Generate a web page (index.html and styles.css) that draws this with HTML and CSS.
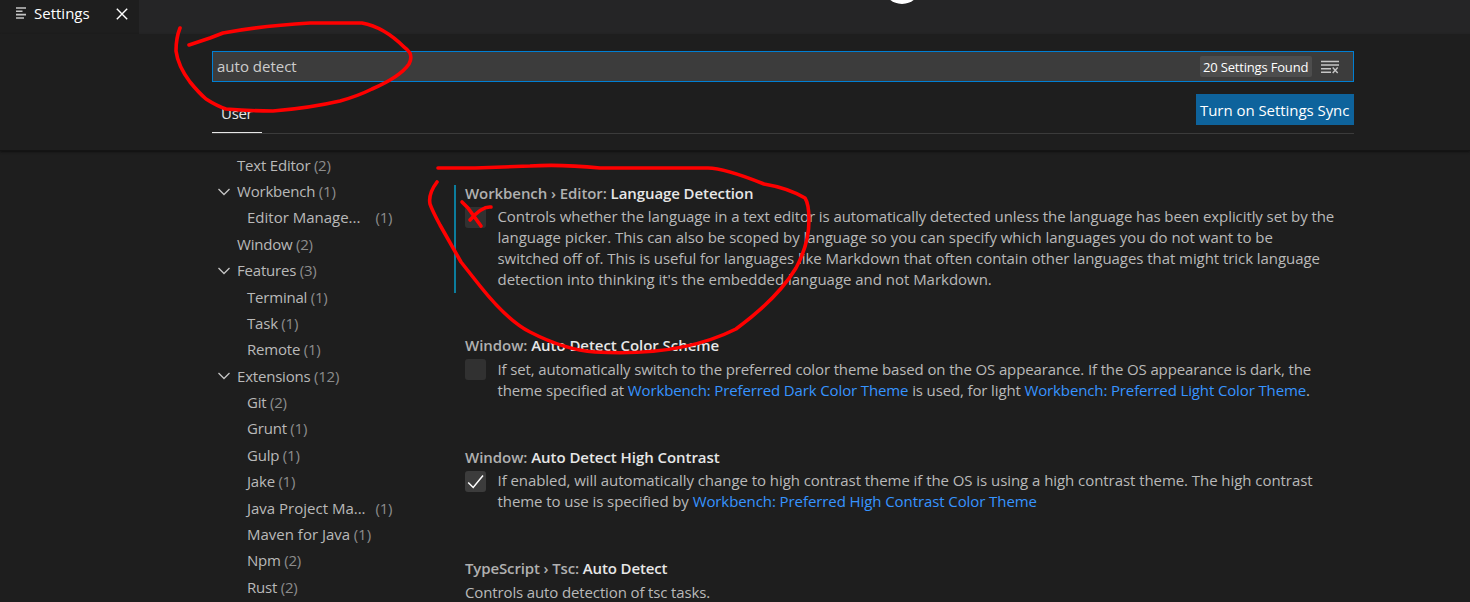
FILE: index.html
```html
<!DOCTYPE html>
<html lang="en">
<head>
<meta charset="utf-8">
<title>Settings</title>
<link rel="stylesheet" href="styles.css">
</head>
<body>
<div class="tabs">
  <div class="tab">
    <svg class="tab-icon" width="12" height="13" viewBox="0 0 12 13"><path d="M0 1h10M0 4.3h6.5M0 7.6h10M0 11h8" stroke="#c5c5c5" stroke-width="1.6"/></svg>
    <span class="tab-label">Settings</span>
    <svg class="tab-close" width="12" height="12" viewBox="0 0 12 12"><path d="M.8.8l10.4 10.4M11.2.8L.8 11.2" stroke="#fff" stroke-width="1.4"/></svg>
  </div>
</div>
<header class="header">
  <div class="search">
    <span class="query">auto detect</span>
    <span class="count">20 Settings Found</span>
    <svg class="clear" width="18" height="14" viewBox="0 0 18 14"><path d="M0 1.5h18M0 5h18M0 8.7h10M0 12.3h10" stroke="#c5c5c5" stroke-width="1.5"/><path d="M11.7 7.5l5 5.5M16.7 7.5l-5 5.5" stroke="#c5c5c5" stroke-width="1.4"/></svg>
  </div>
  <div class="scope">
    <span class="scope-tab">User</span>
    <button class="sync">Turn on Settings Sync</button>
  </div>
</header>
<main class="body">
  <nav class="tree">
    <div class="row"><span>Text Editor</span><i>(2)</i></div>
    <div class="row open"><svg width="12" height="8" viewBox="0 0 12 8"><path d="M.5 1L6 6.5 11.500 1"/></svg><span>Workbench</span><i>(1)</i></div>
    <div class="row sub cut"><span>Editor Manage...</span><i>(1)</i></div>
    <div class="row"><span>Window</span><i>(2)</i></div>
    <div class="row open"><svg width="12" height="8" viewBox="0 0 12 8"><path d="M.5 1L6 6.5 11.500 1"/></svg><span>Features</span><i>(3)</i></div>
    <div class="row sub"><span>Terminal</span><i>(1)</i></div>
    <div class="row sub"><span>Task</span><i>(1)</i></div>
    <div class="row sub"><span>Remote</span><i>(1)</i></div>
    <div class="row open"><svg width="12" height="8" viewBox="0 0 12 8"><path d="M.5 1L6 6.5 11.500 1"/></svg><span>Extensions</span><i>(12)</i></div>
    <div class="row sub"><span>Git</span><i>(2)</i></div>
    <div class="row sub"><span>Grunt</span><i>(1)</i></div>
    <div class="row sub"><span>Gulp</span><i>(1)</i></div>
    <div class="row sub"><span>Jake</span><i>(1)</i></div>
    <div class="row sub cut"><span>Java Project Ma...</span><i>(1)</i></div>
    <div class="row sub wide"><span>Maven for Java</span><i>(1)</i></div>
    <div class="row sub"><span>Npm</span><i>(2)</i></div>
    <div class="row sub"><span>Rust</span><i>(2)</i></div>
  </nav>
  <div class="list">
    <section class="item modified">
      <h2><span>Workbench › Editor:</span> Language Detection</h2>
      <div class="setting"><span class="box"></span>
        <p><span class="snug">Controls whether the language in a text editor is automatically detected unless the language has been explicitly set by the</span><br><span class="loose">language picker. This can also be scoped by language so you can specify which languages you do not want to be</span><br><span class="even">switched off of. This is useful for languages like Markdown that often contain other languages that might trick language</span><br><span class="loose">detection into thinking it's the embedded language and not Markdown.</span></p></div>
    </section>
    <section class="item scheme">
      <h2><span>Window:</span> Auto Detect Color Scheme</h2>
      <div class="setting"><span class="box"></span>
        <p class="tight">If set, automatically switch to the preferred color theme based on the OS appearance. If the OS appearance is dark, the<br>theme specified at <a>Workbench: Preferred Dark Color Theme</a> is used, for light <a>Workbench: Preferred Light Color Theme</a>.</p></div>
    </section>
    <section class="item contrast">
      <h2><span>Window:</span> Auto Detect High Contrast</h2>
      <div class="setting"><span class="box on"><svg width="21" height="21" viewBox="0 0 21 21"><path d="M3.200 11.500l5 5L18 4.500" fill="none" stroke="#fff" stroke-width="1.5"/></svg></span>
        <p><span class="even">If enabled, will automatically change to high contrast theme if the OS is using a high contrast theme. The high contrast</span><br><span class="snug">theme to use is specified by <a>Workbench: Preferred High Contrast Color Theme</a></span></p></div>
    </section>
    <section class="item">
      <h2><span>TypeScript › Tsc:</span> Auto Detect</h2>
      <p class="tight">Controls auto detection of tsc tasks.</p>
    </section>
  </div>
</main>
<svg class="ink" width="1470" height="602" viewBox="0 0 1470 602">
  <circle cx="902" cy="-15" r="19" fill="#fff"/>
  <g fill="none" stroke="#f00" stroke-width="3.600" stroke-linecap="round" stroke-linejoin="round">
    <path d="M180 28Q176 38 176 51Q178 66 190 82Q199 93 206 99Q217 106 226 109Q250 111 273 111Q310 108 340 101Q358 96 372 89Q400 77 409 64Q412 59 410 53Q407 49 404 47Q384 27 362 23H310Q260 26 223 33L210 38L189 45"/>
    <path d="M437 182Q428 194 430 204Q432 210 440 225L461 262L480 286Q508 321 530 332Q565 350 595 352Q680 357 736 329Q778 298 796 268Q809 244 809 220Q809 204 805 198Q788 188 764 184Q724 168 708 168H600Q560 164 530 166L475 168H438"/>
    <path d="M462 202L468 208L481 226M491 207Q482 206 470 220"/>
  </g>
</svg>
</body>
</html>
```
FILE: styles.css
```css
* { box-sizing: border-box; }
body {
  margin: 0;
  width: 1470px;
  height: 602px;
  overflow: hidden;
  background: #1e1e1e;
  color: #b9b9b9;
  font: 15px/21px "Open Sans", sans-serif;
  white-space: nowrap;
}
.tabs { height: 34px; background: #252526; }
.tab {
  width: 139px;
  height: 34px;
  padding: 0 11px 7px 16px;
  display: flex;
  align-items: center;
  background: #1e1e1e;
  color: #fff;
}
.tab-label { margin-left: 6px; flex: 1; letter-spacing: 0; }
.header {
  height: 117px;
  padding: 17px 116px 0 212px;
  border-bottom: 1px solid #141414;
  box-shadow: 0 1px 2px #101010;
}
.search {
  height: 31px;
  padding: 0 14px 0 4px;
  display: flex;
  align-items: center;
  border: 1px solid #007fd4;
  background: #3c3c3c;
}
.query { flex: 1; color: #ccc; }
.count {
  width: 112px;
  height: 21px;
  padding: 1px 0 0 3px;
  border-radius: 2px;
  background: #4d4d4d;
  color: #fff;
  font-size: 13px;
  letter-spacing: -0.18px;
}
.clear { margin-left: 9px; }
.scope {
  height: 52px;
  display: flex;
  justify-content: space-between;
  border-bottom: 1px solid #3b3b3b;
}
.scope-tab {
  width: 50px;
  height: 51px;
  padding: 21px 0 0 9px;
  border-bottom: 1px solid #e7e7e7;
  color: #e7e7e7;
  letter-spacing: -0.3px;
}
.sync {
  width: 158px;
  height: 31px;
  margin-top: 12px;
  padding: 2px 0 0 4px;
  border: 0;
  background: #0e639c;
  color: #fff;
  font: inherit;
  letter-spacing: -0.05px;
  text-align: left;
}
.body { display: flex; }
.tree { width: 242px; margin-left: 212px; padding-top: 1px; }
.row {
  height: 26.38px;
  padding-left: 25px;
  display: flex;
  align-items: center;
  gap: 3.5px;
  letter-spacing: -0.2px;
}
.row.open { padding-left: 6px; }
.row.open span { margin-left: 3.5px; }
.row.sub { padding-left: 35px; }
.row.cut span { width: 125px; letter-spacing: 0; }
.row.wide { letter-spacing: 0; }
.row i { color: #8c8c8c; font-style: normal; }
.row path { fill: none; stroke: #c5c5c5; stroke-width: 1.3; }
.list { width: 916px; padding-top: 34px; }
.item { padding-left: 11px; }
.modified { padding-left: 9px; border-left: 2px solid #0c7d9d; height: 108px; margin-bottom: 42px; }
.scheme { height: 112px; }
.contrast { height: 111px; }
h2 {
  margin: 0;
  height: 21px;
  font-size: 15px;
  line-height: 16px;
  font-weight: 600;
  letter-spacing: -0.08px;
  color: #e7e7e7;
}
h2 span { color: #b0b0b0; }
.scheme h2, .contrast h2, .item:last-child h2 { line-height: 20px; height: 23px; letter-spacing: -0.05px; }
.item:last-child h2 { height: 24px; letter-spacing: -0.13px; }
.setting { display: flex; }
p { margin: 0; }
.setting p { margin-left: 11.5px; }
.scheme p { margin-top: 1px; }
.loose { letter-spacing: -0.025px; }
.even { letter-spacing: -0.06px; }
.snug { letter-spacing: -0.085px; }
.tight { letter-spacing: -0.13px; }
.box { width: 21px; height: 21px; margin-top: 1px; border-radius: 3px; background: #313131; }
.box.on { background: #3c3c3c; }
.box svg { display: block; }
a { color: #3794ff; }
.ink { position: absolute; left: 0; top: 0; }
```
